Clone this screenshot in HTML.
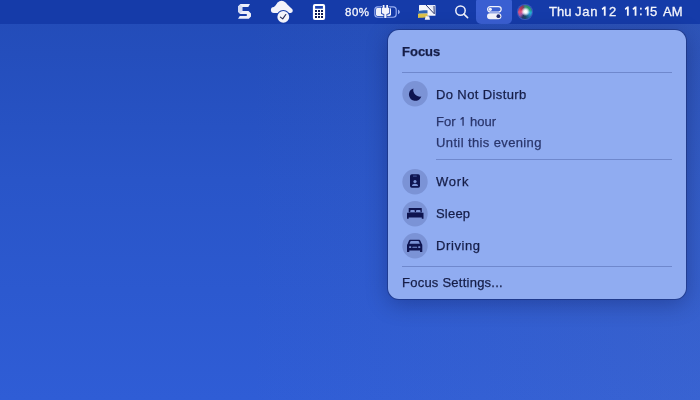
<!DOCTYPE html>
<html><head><meta charset="utf-8">
<style>
html,body{margin:0;padding:0;}
body{width:700px;height:400px;overflow:hidden;position:relative;font-family:"Liberation Sans",sans-serif;
background:linear-gradient(90deg,rgba(140,150,175,0) 35%,rgba(140,150,175,0.10) 100%),linear-gradient(180deg,#224bb7 0%,#2955c8 45%,#2f5dd6 100%);}
.abs{position:absolute;}
#bar{left:0;top:0;width:700px;height:24px;background:#153ba9;}
#hl{left:476px;top:0;width:36px;height:24px;border-radius:1px 1px 5px 5px;background:#3a5fd2;}
.mt{position:absolute;color:#f4f5fc;white-space:nowrap;font-size:13px;line-height:15px;top:4px;-webkit-text-stroke:0.3px #f4f5fc;will-change:transform;}
#panel{left:388px;top:30px;width:298px;height:269px;border-radius:11px;background:#90acf1;
box-shadow:0 0 0 1px rgba(10,20,70,0.32),0 5px 22px rgba(0,5,40,0.28);}
.t{position:absolute;color:#161e48;font-size:13px;line-height:15px;white-space:nowrap;-webkit-text-stroke:0.25px #161e48;will-change:transform;}
.sub{color:#2a366c;-webkit-text-stroke:0.25px #2a366c;}
.sep{position:absolute;height:1px;background:#6f88cd;}
#ov{position:absolute;left:0;top:0;}
.siri{position:absolute;left:518px;top:5px;width:14.2px;height:14.2px;border-radius:50%;
background:conic-gradient(from 0deg,#3a8a7a 0deg,#2a9a68 35deg,#20a088 70deg,#28b0e0 100deg,#2478b0 135deg,#1a4a6a 175deg,#2a3a6a 205deg,#a058a8 235deg,#e45580 270deg,#b83458 310deg,#7a4060 340deg,#3a8a7a 360deg);}
.siri:after{content:"";position:absolute;left:0;top:0;right:0;bottom:0;border-radius:50%;
background:radial-gradient(circle at 54% 47%,#ffffff 0,#ffffff 10%,rgba(240,245,255,0.8) 22%,rgba(240,245,255,0) 42%);}
.siri:before{content:"";position:absolute;left:-0.6px;top:-0.6px;right:-0.6px;bottom:-0.6px;border-radius:50%;
box-shadow:inset 0 0 0 1px rgba(150,160,235,0.3);z-index:2;}
</style></head><body>
<div id="bar" class="abs"></div>
<div id="hl" class="abs"></div>

<svg id="ov" width="700" height="400" viewBox="0 0 700 400">
<!-- S icon (origin 234,2) -->
<g transform="translate(234,2)">
<path d="M6.5 2.1 L16 2.1 L14.3 5 L8.3 5 L8.3 9 L14.5 9 L17 11.5 L17 14.5 L14.8 16.8 L4 16.8 L5.8 14 L12.8 14 L12.8 12 L6.3 12 L4 9.8 L4 4.6 Z" fill="#eceff9"/>
<path d="M4 4.6 L6.5 2.1 L8.3 5 L8.3 9 L6.3 12 L4 9.8 Z" fill="#d3daf3"/>
</g>
<!-- cloud (origin 268,0) -->
<g transform="translate(268,0)">
<g fill="#f3f3fa"><circle cx="5.9" cy="9.9" r="3"/><circle cx="13.6" cy="6.4" r="5.6"/><circle cx="22.7" cy="10.8" r="2.1"/><path d="M5.9 12.9 L5.9 6.9 L10 3 L17.8 3 L24.3 9.3 L22.7 12.9 Z"/></g>
<circle cx="15.3" cy="16.9" r="6.9" fill="#153ba9"/>
<circle cx="15.3" cy="16.9" r="5.9" fill="#f3f3fa"/>
<path d="M12.4 17.1 L14.7 18.9 L17.8 14.5" stroke="#262b58" stroke-width="1.15" fill="none" stroke-linecap="round" stroke-linejoin="round"/>
</g>
<!-- calculator -->
<g transform="translate(312,4)">
<rect x="0.9" y="0.1" width="12.2" height="16" rx="2" fill="#fff"/>
<rect x="3.1" y="2" width="7.8" height="2.7" fill="#1d43b2"/>
<g fill="#0b1a55">
<rect x="3" y="6" width="2" height="2"/><rect x="6" y="6" width="2" height="2"/><rect x="9" y="6" width="2" height="2"/>
<rect x="3" y="9" width="2" height="2"/><rect x="6" y="9" width="2" height="2"/><rect x="9" y="9" width="2" height="2"/>
<rect x="3" y="12" width="2" height="2"/><rect x="6" y="12" width="2" height="2"/><rect x="9" y="12" width="2" height="2"/>
</g>
</g>
<!-- battery (origin 373,4) -->
<g transform="translate(373,4)">
<rect x="1.8" y="2.8" width="21.4" height="10.4" rx="3" fill="none" stroke="#9ab0f2" stroke-width="1.15"/>
<path d="M25 5.8 C26.2 6.2 26.8 7 26.8 8 C26.8 9 26.2 9.8 25 10.2 Z" fill="#9ab0f2"/>
<rect x="3" y="4" width="15" height="8" rx="1.4" fill="#eef0fa"/>
<path d="M9 0.3 L9 3 L8 3 L8 9.2 C8 10 9.2 10.6 10.5 10.7 L10.5 14.8 L14.2 14.8 L14.2 10.7 C15.5 10.6 16.9 10 16.9 9.2 L16.9 3 L15.8 3 L15.8 0.3 Z" fill="#153ba9"/>
<path d="M9.75 1 L11.5 1 L11.5 3.75 L13.25 3.75 L13.25 1 L15 1 L15 3.75 L16.2 3.75 L16.2 8.6 C16.2 9.3 14.9 9.9 13.5 10 L13.5 14 L11.25 14 L11.25 10 C9.9 9.9 8.75 9.3 8.75 8.6 L8.75 3.75 L9.75 3.75 Z" fill="#f3f3fb"/>
</g>
<!-- display icon (origin 415,2) -->
<g transform="translate(415,2)">
<path d="M5 3 L19.8 3 C20.3 3 20.5 3.2 20.5 3.7 L20.5 13.2 C20.5 13.6 20.3 13.75 19.9 13.75 L4.6 13.75 C4.2 13.75 4 13.5 4 13.1 L4 4 C4 3.4 4.4 3 5 3 Z" fill="#f5f6fc"/>
<path d="M13.5 3 L19.5 3 L19.5 9.5 Z" fill="#e3e8f8"/>
<path d="M11 3 L19.25 11.75 L19 4" stroke="#16225e" stroke-width="0.9" fill="none"/>
<path d="M3 9 C5.5 8.4 9 8.1 12.5 8.25 L12.5 11.6 L3 11.8 Z" fill="#2c62b4"/>
<path d="M3 11.8 L12.5 11.6 L12.5 15.3 C9 15.6 5.5 15.8 3 16 Z" fill="#dcc24a"/>
<path d="M10.6 14.2 L14.2 14.2 L15 17.75 L9.75 17.75 Z" fill="#f5f6fc"/>
</g>
<!-- search -->
<g transform="translate(453,4)">
<circle cx="7.5" cy="6.6" r="4.7" fill="none" stroke="#eef0fb" stroke-width="1.5"/>
<path d="M10.9 10.1 L14.6 13.6" stroke="#eef0fb" stroke-width="1.6" stroke-linecap="round"/>
</g>
<!-- control center -->
<g transform="translate(486,5)">
<rect x="1.6" y="1.6" width="13.6" height="5.4" rx="2.7" fill="none" stroke="#f2f3fb" stroke-width="1.2"/>
<circle cx="4.3" cy="4.3" r="1.6" fill="#f2f3fb"/>
<rect x="1" y="8.2" width="14.4" height="6" rx="3" fill="#f2f3fb"/>
<circle cx="12.4" cy="11.2" r="1.9" fill="#1e2a6e"/>
</g>
</svg>

<div class="siri"></div>

<div class="mt" style="left:548.5px;">Thu</div>
<div class="mt" style="left:575px;letter-spacing:0.8px;">Jan</div>
<div class="mt" style="left:608.5px;">2</div>
<div class="mt" style="left:639px;top:3.3px;">:</div>
<div class="mt" style="left:650px;">5</div>
<svg class="abs" style="left:0;top:0" width="700" height="24"><path d="M604.00 6.4 L605.65 6.4 L605.65 15.8 L603.85 15.8 L603.85 9.00 L602.30 10.00 L601.70 8.60 Z M627.10 6.4 L628.75 6.4 L628.75 15.8 L626.95 15.8 L626.95 9.00 L625.40 10.00 L624.80 8.60 Z M634.80 6.4 L636.45 6.4 L636.45 15.8 L634.65 15.8 L634.65 9.00 L633.10 10.00 L632.50 8.60 Z M647.00 6.4 L648.65 6.4 L648.65 15.8 L646.85 15.8 L646.85 9.00 L645.30 10.00 L644.70 8.60 Z" fill="#f4f5fc"/></svg>
<div class="mt" style="left:663px;">AM</div>
<div class="mt" style="left:345px;top:5px;font-size:11.5px;line-height:14px;letter-spacing:0.5px;">80%</div>

<div id="panel" class="abs">
  <div class="t" style="left:14px;top:14px;font-weight:bold;">Focus</div>
  <div class="sep" style="left:14px;top:42px;width:270px;"></div>
  <div class="t" style="left:48px;top:57px;letter-spacing:0.38px;">Do Not Disturb</div>
  <div class="t sub" style="left:48px;top:84px;">For</div>
  <div class="t sub" style="left:82px;top:84px;">hour</div>
  <div class="t sub" style="left:48px;top:105px;letter-spacing:0.38px;">Until this evening</div>
  <div class="sep" style="left:48px;top:129px;width:236px;"></div>
  <div class="t" style="left:48px;top:144px;letter-spacing:0.8px;">Work</div>
  <div class="t" style="left:48px;top:176px;letter-spacing:0.2px;">Sleep</div>
  <div class="t" style="left:48px;top:208px;letter-spacing:0.6px;">Driving</div>
  <div class="sep" style="left:14px;top:236px;width:270px;"></div>
  <div class="t" style="left:14px;top:245px;letter-spacing:0.24px;">Focus Settings...</div>
</div>

<svg class="abs" style="left:0;top:0" width="700" height="400" viewBox="0 0 700 400">
<g fill="#7b93d6">
<circle cx="415" cy="93.8" r="12.7"/>
<circle cx="415" cy="181.8" r="12.7"/>
<circle cx="415" cy="213.8" r="12.7"/>
<circle cx="415" cy="245.8" r="12.7"/>
</g>
<path d="M462.40 116.9 L463.75 116.9 L463.75 125.7 L462.40 125.7 L462.40 119.00 L460.70 120.10 L460.30 119.10 Z" fill="#2a366c"/>
<g fill="#0e1450">
<path d="M413.4 88.4 A6.35 6.35 0 1 0 421.3 96.5 A6.75 6.75 0 0 1 413.4 88.4 Z"/>
<!-- work badge -->
<rect x="410" y="174.25" width="10" height="13.5" rx="1.8"/>
<!-- bed -->
<path d="M409.2 208 L421.3 208 C421.6 208 421.8 208.2 421.8 208.5 L421.8 212.5 L408.7 212.5 L408.7 208.5 C408.7 208.2 408.9 208 409.2 208 Z"/>
<path d="M407 212.8 L423.5 212.8 L423.5 218.8 L421.8 218.8 L421.8 217.4 L408.7 217.4 L408.7 218.8 L407 218.8 Z"/>
<!-- car -->
<path d="M410.6 239.8 L418.6 239.8 C419.6 239.8 420.2 240.3 420.5 241 L421.8 244 C422.2 244.3 422.3 244.8 422.3 245.3 L422.3 252 L420 252 L420 250.6 L409.3 250.6 L409.3 252 L407 252 L407 245.3 C407 244.8 407.2 244.3 407.6 244 L408.8 241 C409.1 240.3 409.6 239.8 410.6 239.8 Z"/>
</g>
<g fill="#7b93d6">
<!-- work details -->
<rect x="413" y="175.5" width="3.8" height="1.25" rx="0.3" fill="#3c4c90"/>
<circle cx="415" cy="181.5" r="1.6"/>
<path d="M412 186 C412 184.6 413.2 183.75 415 183.75 C416.8 183.75 418 184.6 418 186 Z"/>
<!-- bed pillows -->
<path d="M410.3 212.1 L410.3 210.8 C410.3 210.3 410.7 210 411.2 210 L413.9 210 C414.4 210 414.8 210.3 414.8 210.8 L414.8 212.1 Z"/>
<path d="M416 212.1 L416 210.8 C416 210.3 416.4 210 416.9 210 L419.6 210 C420.1 210 420.5 210.3 420.5 210.8 L420.5 212.1 Z"/>
<!-- car windshield, lights, grille -->
<path d="M411.2 241.1 L418.1 241.1 C418.6 241.1 418.9 241.3 419.1 241.8 L419.8 243.8 L409.5 243.8 L410.2 241.8 C410.4 241.3 410.7 241.1 411.2 241.1 Z"/>
<rect x="409" y="246.2" width="2.3" height="1.8" rx="0.8"/>
<rect x="418.1" y="246.2" width="2.3" height="1.8" rx="0.8"/>
<rect x="412.3" y="246.8" width="4.9" height="1" rx="0.4"/>
</g>
</svg>
</body></html>
